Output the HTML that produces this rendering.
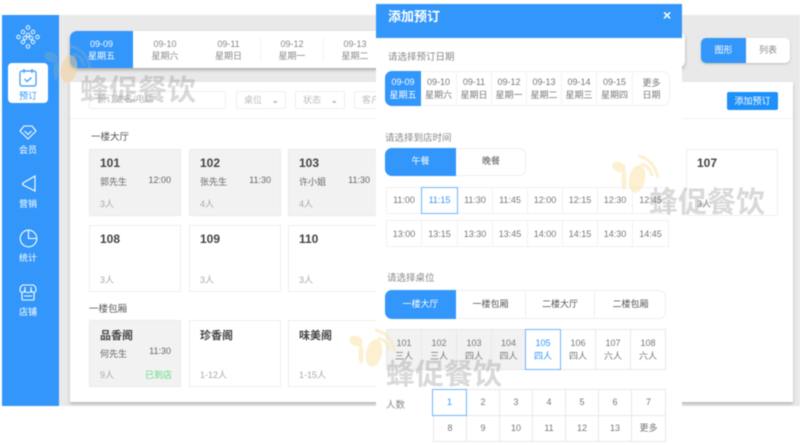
<!DOCTYPE html>
<html lang="zh"><head><meta charset="utf-8"><style>
html,body{margin:0;padding:0;background:#fff}
#p{position:relative;width:800px;height:445px;overflow:hidden;background:#fff;font-family:"Liberation Sans","Noto Sans CJK SC",sans-serif;color:#777;filter:blur(.5px)}
#p div{position:absolute;box-sizing:border-box}
.c{text-align:center}
.tb{border:1px solid #eee;background:#fff}
.g{background:#f2f2f2;border-color:#ebebeb}
.tn{left:10px;top:6px;font-size:12px;font-weight:bold;color:#444}
.nm{left:10px;top:25px;font-size:9px;color:#666}
.tm{right:9px;top:25px;font-size:9px;color:#666}
.pp{left:10px;bottom:5px;font-size:9px;color:#aaa}
.cell{border:1px solid #f1f1f1;text-align:center;font-size:9px;color:#777;background:#fff}
.wm{font-family:"Noto Sans CJK SC",sans-serif;font-weight:700;font-size:29px;color:rgba(130,130,130,.3);white-space:nowrap;line-height:32px}
.lb{font-size:9px;color:#fff;text-align:center;width:57px;left:0}
.d{height:35px;font-size:9px;line-height:13px;padding-top:5px;color:#777;border-right:1px solid #f3f3f3;text-align:center;top:71px}
</style></head><body><div id="p">
<div style="left:59px;top:15px;width:741px;height:391px;background:#e9e9e9"></div>
<div style="left:2px;top:15px;width:57px;height:391px;background:#3296fa"></div>
<svg style="position:absolute;left:15px;top:24px" width="26" height="26" viewBox="0 0 26 26" fill="none" stroke="#fff" stroke-width="1.1" opacity=".85"><circle cx="13" cy="3.500" r="1.800"/><circle cx="8" cy="8" r="1.800"/><circle cx="18" cy="8" r="1.800"/><circle cx="3.500" cy="13" r="1.800"/><circle cx="13" cy="11" r="1.800"/><circle cx="22.500" cy="13" r="1.800"/><circle cx="10" cy="14" r="1.800"/><circle cx="16" cy="14" r="1.800"/><circle cx="8" cy="18" r="1.800"/><circle cx="18" cy="18" r="1.800"/><circle cx="13" cy="22.500" r="1.800"/></svg>
<div style="left:8px;top:63px;width:40px;height:40px;background:#fff;border-radius:4px"></div>
<svg style="position:absolute;left:18px;top:68px" width="20" height="20" viewBox="0 0 20 20" fill="none" stroke="#3296fa" stroke-width="1.200"><rect x="2" y="3" width="16" height="15" rx="2"/><path d="M6 1v4M14 1v4M6.500 11l2.500 2.500 4.500-4"/></svg>
<div class="lb" style="left:0;top:89px;width:56px;color:#3296fa">预订</div>
<svg style="position:absolute;left:19px;top:124px" width="18" height="16" viewBox="0 0 18 16" fill="none" stroke="#fff" stroke-width="1.100"><path d="M5 2h8l4 5-8 8-8-8zM5.500 7l3.500 3.500L12.500 7"/></svg>
<div class="lb" style="left:0;top:143px;width:56px">会员</div>
<svg style="position:absolute;left:21px;top:175px" width="16" height="18" viewBox="0 0 16 18" fill="none" stroke="#fff" stroke-width="1.100"><path d="M14 1v15L2 10q-1-1 0-2z"/></svg>
<div class="lb" style="left:0;top:197px;width:56px">营销</div>
<svg style="position:absolute;left:19px;top:229px" width="19" height="19" viewBox="0 0 19 19" fill="none" stroke="#fff" stroke-width="1.100"><circle cx="9.500" cy="9.500" r="8.300"/><path d="M9.500 1.500v8h8"/></svg>
<div class="lb" style="left:0;top:251px;width:56px">统计</div>
<svg style="position:absolute;left:19px;top:284px" width="18" height="17" viewBox="0 0 18 17" fill="none" stroke="#fff" stroke-width="1.100"><path d="M4 1h10q3 1 3 5 0 2-2 2.500-2 0-2.500-1.500-.5 1.500-3.500 1.500S6 8.500 5.500 7Q5 8.500 3 8.500 1 8 1 6q0-4 3-5zM3 9v6q0 1 1 1h10q1 0 1-1V9M6 3v4M12 3v4M5 12h8"/></svg>
<div class="lb" style="left:0;top:305px;width:56px">店铺</div>

<div style="left:70px;top:82px;width:723px;height:320px;background:#fff;box-shadow:0 2px 3px rgba(120,120,120,.45)"></div>
<div style="left:70px;top:118px;width:723px;height:1px;background:#fbeef0"></div>
<div style="left:70px;top:31px;width:615px;height:37px;background:#fff;border-radius:7px;box-shadow:0 2px 3px rgba(110,110,110,.5)"></div>
<div style="left:70px;top:31px;width:63px;height:37px;background:#3296fa;border-radius:7px 0 0 7px"></div>
<div class="c" style="left:70px;top:38px;width:63px;font-size:9px;line-height:12px;color:#fff">09-09<br>星期五</div>
<div class="c" style="left:133px;top:38px;width:64px;font-size:9px;line-height:12px;color:#888">09-10<br>星期六</div>
<div class="c" style="left:197px;top:38px;width:63px;font-size:9px;line-height:12px;color:#888">09-11<br>星期日</div>
<div class="c" style="left:260px;top:38px;width:63px;font-size:9px;line-height:12px;color:#888;border-left:1px solid #f4f4f4">09-12<br>星期一</div>
<div class="c" style="left:323px;top:38px;width:63px;font-size:9px;line-height:12px;color:#888;border-left:1px solid #f4f4f4">09-13<br>星期二</div>

<div style="left:701px;top:38px;width:89px;height:25px;background:#fff;border-radius:5px;box-shadow:0 1px 2px rgba(120,120,120,.4)"></div>
<div class="c" style="left:701px;top:38px;width:45px;height:25px;background:#3296fa;border-radius:5px 0 0 5px;color:#fff;font-size:9px;line-height:25px">图形</div>
<div class="c" style="left:746px;top:38px;width:44px;height:25px;color:#888;font-size:9px;line-height:25px">列表</div>
<div class="c" style="left:727px;top:92px;width:51px;height:18px;background:#1e90fa;border-radius:2px;color:#fff;font-size:9px;line-height:18px">添加预订</div>

<div style="left:89px;top:91px;width:137px;height:18px;border:1px solid #eee;border-radius:2px;font-size:9px;color:#bbb;line-height:15px;padding-left:7px">预订姓名/电话</div>
<div style="left:236px;top:91px;width:50px;height:18px;border:1px solid #eee;border-radius:2px;font-size:9px;color:#bbb;line-height:16px;padding-left:7px">桌位<span style="position:absolute;right:6px;top:0;color:#888">⌄</span></div>
<div style="left:295px;top:91px;width:50px;height:18px;border:1px solid #eee;border-radius:2px;font-size:9px;color:#bbb;line-height:16px;padding-left:7px">状态<span style="position:absolute;right:6px;top:0;color:#888">⌄</span></div>
<div style="left:354px;top:91px;width:40px;height:18px;border:1px solid #eee;border-radius:2px;font-size:9px;color:#bbb;line-height:16px;padding-left:7px">客户</div>
<div style="left:91px;top:129px;font-size:9.500px;color:#555">一楼大厅</div>
<div style="left:89px;top:301px;font-size:9.500px;color:#555">一楼包厢</div>

<div class="tb g" style="left:89px;top:149px;width:92px;height:67px"><div class="tn">101</div><div class="nm">郭先生</div><div class="tm">12:00</div><div class="pp">3人</div></div>
<div class="tb g" style="left:189px;top:149px;width:92px;height:67px"><div class="tn">102</div><div class="nm">张先生</div><div class="tm">11:30</div><div class="pp">4人</div></div>
<div class="tb g" style="left:288px;top:149px;width:92px;height:67px"><div class="tn">103</div><div class="nm">许小姐</div><div class="tm">11:30</div><div class="pp">4人</div></div>
<div class="tb" style="left:686px;top:149px;width:92px;height:67px"><div class="tn" style="left:10px">107</div><div class="pp" style="left:10px;color:#777">3人</div></div>
<div class="tb" style="left:89px;top:225px;width:92px;height:67px"><div class="tn">108</div><div class="pp">3人</div></div>
<div class="tb" style="left:189px;top:225px;width:92px;height:67px"><div class="tn">109</div><div class="pp">3人</div></div>
<div class="tb" style="left:288px;top:225px;width:92px;height:67px"><div class="tn">110</div><div class="pp">3人</div></div>
<div class="tb g" style="left:89px;top:320px;width:92px;height:67px"><div class="tn" style="font-size:11px">品香阁</div><div class="nm" style="top:26px">何先生</div><div class="tm" style="top:25px">11:30</div><div class="pp">9人</div><div style="right:8px;bottom:5px;font-size:9px;color:#5fdc7f">已到店</div></div>
<div class="tb" style="left:189px;top:320px;width:92px;height:67px"><div class="tn" style="font-size:11px">珍香阁</div><div class="pp">1-12人</div></div>
<div class="tb" style="left:288px;top:320px;width:92px;height:67px"><div class="tn" style="font-size:11px">味美阁</div><div class="pp">1-15人</div></div>

<svg style="position:absolute;left:44px;top:44px" width="50" height="40" viewBox="0 0 50 40" fill="none" opacity=".5"><ellipse cx="25" cy="25" rx="8" ry="14" fill="#f5cf8e" transform="rotate(12 25 25)"/><ellipse cx="7" cy="13" rx="7" ry="5" fill="#6fa8d2" transform="rotate(25 7 13)"/><path d="M26 2q16 3 20 22M29 10q9 2 11 12" stroke="#6fa8d2" stroke-width="3"/><ellipse cx="12" cy="26" rx="2.500" ry="10" fill="#6fa8d2"/></svg>
<div class="wm" style="left:80px;top:72px">蜂促餐饮</div>

<div style="left:376px;top:38px;width:306px;height:407px;background:#fff"></div>
<div style="left:376px;top:4px;width:306px;height:34px;background:#3296fa"></div>
<div style="left:388px;top:6px;font-size:13px;font-weight:bold;color:#fff">添加预订</div>
<div style="left:663px;top:7px;font-size:14px;font-weight:bold;color:#fff">×</div>
<div style="left:388px;top:49px;font-size:9.500px;color:#888">请选择预订日期</div>
<div style="left:385px;top:71px;width:285px;height:35px;border:1px solid #f2f2f2;border-radius:7px"></div>
<div class="c" style="left:385px;top:71px;width:36px;height:35px;background:#3296fa;border-radius:7px 0 0 7px;color:#fff;font-size:9px;line-height:13px;padding-top:5px">09-09<br>星期五</div>
<div class="d" style="left:421px;width:36px">09-10<br>星期六</div>
<div class="d" style="left:457px;width:35px">09-11<br>星期日</div>
<div class="d" style="left:492px;width:35px">09-12<br>星期一</div>
<div class="d" style="left:527px;width:35px">09-13<br>星期二</div>
<div class="d" style="left:562px;width:35px">09-14<br>星期三</div>
<div class="d" style="left:597px;width:36px">09-15<br>星期四</div>
<div class="c" style="left:633px;top:71px;width:37px;height:35px;font-size:9px;line-height:12px;padding-top:6px;color:#777">更多<br>日期</div>

<div style="left:385px;top:130px;font-size:9.500px;color:#888">请选择到店时间</div>
<div style="left:385px;top:148px;width:141px;height:28px;border:1px solid #eee;border-radius:7px"></div>
<div class="c" style="left:385px;top:148px;width:71px;height:28px;background:#3296fa;border-radius:7px 0 0 7px;color:#fff;font-size:9px;line-height:27px">午餐</div>
<div class="c" style="left:456px;top:148px;width:70px;height:28px;color:#555;font-size:9px;line-height:27px">晚餐</div>

<div class="cell" style="left:386px;top:187px;width:36px;height:27px;line-height:25px">11:00</div>
<div class="cell" style="left:421px;top:187px;width:37px;height:27px;line-height:25px;border-color:#6fb4fb;color:#3296fa;z-index:2">11:15</div>
<div class="cell" style="left:457px;top:187px;width:36px;height:27px;line-height:25px">11:30</div>
<div class="cell" style="left:492px;top:187px;width:36px;height:27px;line-height:25px">11:45</div>
<div class="cell" style="left:527px;top:187px;width:36px;height:27px;line-height:25px">12:00</div>
<div class="cell" style="left:562px;top:187px;width:36px;height:27px;line-height:25px">12:15</div>
<div class="cell" style="left:597px;top:187px;width:36px;height:27px;line-height:25px">12:30</div>
<div class="cell" style="left:632px;top:187px;width:37px;height:27px;line-height:25px">12:45</div>
<div class="cell" style="left:386px;top:220px;width:36px;height:27px;line-height:26px">13:00</div>
<div class="cell" style="left:421px;top:220px;width:37px;height:27px;line-height:26px">13:15</div>
<div class="cell" style="left:457px;top:220px;width:36px;height:27px;line-height:26px">13:30</div>
<div class="cell" style="left:492px;top:220px;width:36px;height:27px;line-height:26px">13:45</div>
<div class="cell" style="left:527px;top:220px;width:36px;height:27px;line-height:26px">14:00</div>
<div class="cell" style="left:562px;top:220px;width:36px;height:27px;line-height:26px">14:15</div>
<div class="cell" style="left:597px;top:220px;width:36px;height:27px;line-height:26px">14:30</div>
<div class="cell" style="left:632px;top:220px;width:37px;height:27px;line-height:26px">14:45</div>

<div style="left:387px;top:270px;font-size:9.500px;color:#888">请选择桌位</div>
<div style="left:385px;top:290px;width:281px;height:29px;border:1px solid #eee;border-radius:7px"></div>
<div class="c" style="left:385px;top:290px;width:71px;height:29px;background:#3296fa;border-radius:7px 0 0 7px;color:#fff;font-size:9px;line-height:28px">一楼大厅</div>
<div class="c" style="left:456px;top:290px;width:70px;height:29px;color:#555;font-size:9px;line-height:28px;border-right:1px solid #eee">一楼包厢</div>
<div class="c" style="left:526px;top:290px;width:69px;height:29px;color:#555;font-size:9px;line-height:28px;border-right:1px solid #eee">二楼大厅</div>
<div class="c" style="left:595px;top:290px;width:71px;height:29px;color:#555;font-size:9px;line-height:28px">二楼包厢</div>

<div class="cell" style="left:386px;top:329px;width:36px;height:41px;line-height:13px;padding-top:7px;background:#f2f2f2;border-color:#e8e8e8">101<br>三人</div>
<div class="cell" style="left:421px;top:329px;width:36px;height:41px;line-height:13px;padding-top:7px;background:#f2f2f2;border-color:#e8e8e8">102<br>三人</div>
<div class="cell" style="left:456px;top:329px;width:36px;height:41px;line-height:13px;padding-top:7px;background:#f2f2f2;border-color:#e8e8e8">103<br>四人</div>
<div class="cell" style="left:491px;top:329px;width:35px;height:41px;line-height:13px;padding-top:7px;background:#f2f2f2;border-color:#e8e8e8">104<br>四人</div>
<div class="cell" style="left:525px;top:329px;width:36px;height:41px;line-height:13px;padding-top:7px;border-color:#6fb4fb;color:#3296fa;z-index:2">105<br>四人</div>
<div class="cell" style="left:560px;top:329px;width:36px;height:41px;line-height:13px;padding-top:7px;border-color:#e8e8e8">106<br>四人</div>
<div class="cell" style="left:595px;top:329px;width:36px;height:41px;line-height:13px;padding-top:7px;border-color:#e8e8e8">107<br>六人</div>
<div class="cell" style="left:630px;top:329px;width:36px;height:41px;line-height:13px;padding-top:7px;border-color:#e8e8e8">108<br>六人</div>

<div style="left:386px;top:397px;font-size:9.500px;color:#888">人数</div>
<div class="cell" style="left:432px;top:389px;width:35px;height:27px;line-height:25px;border-color:#6fb4fb;color:#3296fa;z-index:2">1</div>
<div class="cell" style="left:466px;top:389px;width:34px;height:27px;line-height:25px;border-color:#e8e8e8">2</div>
<div class="cell" style="left:499px;top:389px;width:34px;height:27px;line-height:25px;border-color:#e8e8e8">3</div>
<div class="cell" style="left:532px;top:389px;width:34px;height:27px;line-height:25px;border-color:#e8e8e8">4</div>
<div class="cell" style="left:565px;top:389px;width:34px;height:27px;line-height:25px;border-color:#e8e8e8">5</div>
<div class="cell" style="left:598px;top:389px;width:34px;height:27px;line-height:25px;border-color:#e8e8e8">6</div>
<div class="cell" style="left:631px;top:389px;width:35px;height:27px;line-height:25px;border-color:#e8e8e8">7</div>
<div class="cell" style="left:433px;top:415px;width:34px;height:27px;line-height:25px;border-color:#e8e8e8">8</div>
<div class="cell" style="left:466px;top:415px;width:34px;height:27px;line-height:25px;border-color:#e8e8e8">9</div>
<div class="cell" style="left:499px;top:415px;width:34px;height:27px;line-height:25px;border-color:#e8e8e8">10</div>
<div class="cell" style="left:532px;top:415px;width:34px;height:27px;line-height:25px;border-color:#e8e8e8">11</div>
<div class="cell" style="left:565px;top:415px;width:34px;height:27px;line-height:25px;border-color:#e8e8e8">12</div>
<div class="cell" style="left:598px;top:415px;width:34px;height:27px;line-height:25px;border-color:#e8e8e8">13</div>
<div class="cell" style="left:631px;top:415px;width:35px;height:27px;line-height:25px;border-color:#e8e8e8">更多</div>

<svg style="position:absolute;left:349px;top:328px;z-index:3" width="50" height="40" viewBox="0 0 50 40" fill="none" opacity=".6"><ellipse cx="25" cy="25" rx="8" ry="14" fill="#fbe7b4" transform="rotate(12 25 25)"/><ellipse cx="7" cy="13" rx="7" ry="5" fill="#fbe7b4" transform="rotate(25 7 13)"/><path d="M26 2q16 3 20 22M29 10q9 2 11 12" stroke="#fbe7b4" stroke-width="3"/><ellipse cx="12" cy="26" rx="2.500" ry="10" fill="#fbe7b4"/></svg>
<div class="wm" style="left:386px;top:356px;z-index:3">蜂促餐饮</div>
<svg style="position:absolute;left:612px;top:154px;z-index:3" width="50" height="40" viewBox="0 0 50 40" fill="none" opacity=".6"><ellipse cx="25" cy="25" rx="8" ry="14" fill="#fbe7b4" transform="rotate(12 25 25)"/><ellipse cx="7" cy="13" rx="7" ry="5" fill="#fbe7b4" transform="rotate(25 7 13)"/><path d="M26 2q16 3 20 22M29 10q9 2 11 12" stroke="#fbe7b4" stroke-width="3"/><ellipse cx="12" cy="26" rx="2.500" ry="10" fill="#fbe7b4"/></svg>
<div class="wm" style="left:649px;top:184px;z-index:3">蜂促餐饮</div>
</div></body></html>
